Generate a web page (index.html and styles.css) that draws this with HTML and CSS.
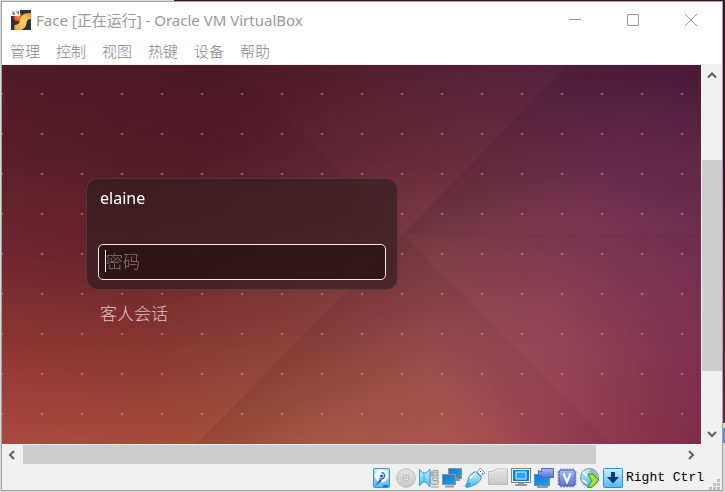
FILE: index.html
```html
<!DOCTYPE html>
<html lang="zh-CN">
<head>
<meta charset="utf-8">
<title>Face [正在运行] - Oracle VM VirtualBox</title>
<link rel="stylesheet" href="styles.css">
</head>
<body>
<div class="window">
  <header class="titlebar">
    <svg class="app-icon" viewBox="0 0 20 20" aria-hidden="true">
      <defs>
        <linearGradient id="gold" x1="1" y1="0" x2="0" y2="1"><stop offset="0" stop-color="#f29a22"/><stop offset=".5" stop-color="#ffd268"/><stop offset="1" stop-color="#f4a52e"/></linearGradient>
        <radialGradient id="ball"><stop offset="0" stop-color="#ff9a3a"/><stop offset="1" stop-color="#d8400f"/></radialGradient>
      </defs>
      <rect width="20" height="20" fill="#2c313d"/>
      <circle cx="7" cy="7" r="4.500" fill="url(#ball)"/>
      <path d="M20 3v6c-3 0-4 1-4.500 4-.8 4-2.500 6-5.500 7H3.500v-5C6 15 8 14 8.500 12 9 8 11 4.500 14.500 3.500z" fill="url(#gold)"/>
      <rect width="9" height="6" fill="#f4f4f2"/>
      <path d="M2 1v3.500h1.500V3H2M6 1v2h1.500V1v3.500" fill="none" stroke="#666" stroke-width=".8"/>
    </svg>
    <h1>Face [正在运行] - Oracle VM VirtualBox</h1>
    <div class="window-buttons">
      <button aria-label="最小化"><svg viewBox="0 0 12 12"><path d="M0 5.500h12"/></svg></button>
      <button aria-label="最大化"><svg viewBox="0 0 12 12"><path d="M.5.5h11v11H.5z"/></svg></button>
      <button aria-label="关闭"><svg viewBox="0 0 12 12"><path d="M0 0l12 12M12 0L0 12"/></svg></button>
    </div>
  </header>
  <nav class="menubar">
    <button>管理</button><button>控制</button><button>视图</button><button>热键</button><button>设备</button><button>帮助</button>
  </nav>
  <div class="viewport">
    <main class="screen">
      <div class="wallpaper" aria-hidden="true">
        <div class="band band-5"></div>
        <div class="band band-4"></div>
        <div class="band band-3"></div>
        <div class="band band-2"></div>
        <div class="band band-1"></div>
        <svg class="facets" viewBox="0 0 699 379" preserveAspectRatio="none">
          <defs>
            <linearGradient id="fa" gradientUnits="userSpaceOnUse" x1="480" y1="80" x2="560" y2="150"><stop offset="0" stop-color="#200a20" stop-opacity=".13"/><stop offset="1" stop-color="#200a20" stop-opacity="0"/></linearGradient>
            <linearGradient id="fb" gradientUnits="userSpaceOnUse" x1="0" y1="169" x2="0" y2="240"><stop offset="0" stop-color="#200a10" stop-opacity=".05"/><stop offset="1" stop-color="#200a10" stop-opacity="0"/></linearGradient>
            <linearGradient id="fc" gradientUnits="userSpaceOnUse" x1="300" y1="270" x2="370" y2="340"><stop offset="0" stop-color="#300a10" stop-opacity=".1"/><stop offset="1" stop-color="#300a10" stop-opacity="0"/></linearGradient>
            <linearGradient id="fd" gradientUnits="userSpaceOnUse" x1="500" y1="270" x2="440" y2="330"><stop offset="0" stop-color="#300a20" stop-opacity=".06"/><stop offset="1" stop-color="#300a20" stop-opacity="0"/></linearGradient>
            <linearGradient id="fe" gradientUnits="userSpaceOnUse" x1="320" y1="90" x2="240" y2="160"><stop offset="0" stop-color="#200a14" stop-opacity=".06"/><stop offset="1" stop-color="#200a14" stop-opacity="0"/></linearGradient>
          </defs>
          <path d="M566 0H699V169H401z" fill="url(#fa)"/>
          <path d="M401 169H699V379H608z" fill="url(#fb)"/>
          <path d="M401 169L194 379H608z" fill="url(#fc)"/>
          <path d="M401 169L608 379H194z" fill="url(#fd)"/>
          <path d="M230 0L401 169H100V0z" fill="url(#fe)"/>
        </svg>
        <svg class="dots">
          <defs><pattern id="dot" x="-1" y="28" width="40" height="40" patternUnits="userSpaceOnUse"><rect width="2" height="2" fill="#ffdce1" fill-opacity=".32"/></pattern></defs>
          <rect width="100%" height="100%" fill="url(#dot)"/>
        </svg>
      </div>
      <div class="greeter">
        <form class="login">
          <label for="password">elaine</label>
          <div class="field">
            <input id="password" type="password" placeholder="密码">
            <span class="caret"></span>
          </div>
        </form>
        <button class="guest">客人会话</button>
      </div>
    </main>
    <div class="scroll vertical">
      <button aria-label="向上滚动"><svg viewBox="0 0 10 10"><path d="M1 7.500l4-4 4 4"/></svg></button>
      <div class="track"><div class="thumb"></div></div>
      <button aria-label="向下滚动"><svg viewBox="0 0 10 10"><path d="M1 3l4 4 4-4"/></svg></button>
    </div>
    <div class="scroll horizontal">
      <button aria-label="向左滚动"><svg viewBox="0 0 10 10"><path d="M7 1L3 5l4 4"/></svg></button>
      <div class="track"><div class="thumb"></div></div>
      <button aria-label="向右滚动"><svg viewBox="0 0 10 10"><path d="M3 1l4 4-4 4"/></svg></button>
    </div>
    <div class="corner"></div>
  </div>
  <footer class="statusbar">
    <svg class="defs" aria-hidden="true"><defs>
      <linearGradient id="sky" x1="0" y1="0" x2="0" y2="1"><stop offset="0" stop-color="#c8f1ff"/><stop offset="1" stop-color="#4db9f5"/></linearGradient>
      <linearGradient id="blue" x1="0" y1="0" x2="1" y2="1"><stop offset="0" stop-color="#0b78d8"/><stop offset="1" stop-color="#18a5f8"/></linearGradient>
      <linearGradient id="grey" x1="0" y1="0" x2="0" y2="1"><stop offset="0" stop-color="#e4e4e4"/><stop offset="1" stop-color="#c8c8c8"/></linearGradient>
      <linearGradient id="violet" x1="0" y1="0" x2="0" y2="1"><stop offset="0" stop-color="#a5bdf5"/><stop offset="1" stop-color="#5573d6"/></linearGradient>
    </defs></svg>
    <div class="indicators">
      <svg viewBox="0 0 20 20"><rect x=".5" y=".5" width="16" height="19" rx="1.500" fill="url(#sky)" stroke="#3d8fd0"/><circle cx="8.500" cy="8" r="6.500" fill="#fff"/><path d="M8.500 4.500a3.200 3.200 0 1 1-2 5.800" fill="none" stroke="#2b6fc0" stroke-width="1.500"/><circle cx="8.500" cy="8" r="1.500" fill="#1d5aa8"/><path d="M2 18l5-7 2 2z" fill="#1f65b8"/><path d="M10 18h5" stroke="#1f78c8" stroke-width="2"/></svg>
      <svg viewBox="0 0 20 20"><circle cx="10" cy="10" r="9.300" fill="url(#grey)" stroke="#bdbdbd"/><circle cx="10" cy="10" r="3" fill="#e4e4e4" stroke="#b8b8b8"/><circle cx="10" cy="10" r="1" fill="#aaa"/></svg>
      <svg viewBox="0 0 20 20"><path d="M10 4h3v4h-3zM14 2.500h5v10h-5zM11 9v5q1 3 5 3t4-4M12 19h8" fill="#d2d2d2" stroke="#999"/><path d="M14 5h5M14 7.500h5M14 10h5" stroke="#aaa"/><path d="M.5 1.500L4 5h3l4-4v18l-4-5H4L.5 18z" fill="url(#sky)" stroke="#359de4"/><path d="M5 5.500v8" stroke="#3ca7ea"/></svg>
      <svg viewBox="0 0 20 20"><rect x="6.500" y=".5" width="13" height="10" fill="url(#blue)" stroke="#8b949c"/><path d="M14 12h4" stroke="#8b949c" stroke-width="2"/><rect x=".5" y="6.500" width="13" height="10" fill="url(#blue)" stroke="#8b949c"/><path d="M3 18.500h9" stroke="#999" stroke-width="2"/></svg>
      <svg viewBox="0 0 20 20"><path d="M12 4l3-4 5 5-4 3z" fill="#f5f5f5" stroke="#999"/><path d="M15 3l1 1M17 5l1 1" stroke="#555"/><path d="M10.500 3.500l6 6q-2 6-10 8.500L2 19.500.5 18l2-4q1-8 8-10.500z" fill="url(#sky)" stroke="#318ed4"/><path d="M5 10l5-4" stroke="#fff" stroke-width="2"/><path d="M5 15l-4 4" stroke="#2b9ce5" stroke-width="2"/></svg>
      <svg viewBox="0 0 20 20"><path d="M.5 16.500v-13L6 3l2-2h11.500v15.500z" fill="url(#grey)" stroke="#bbb"/><path d="M1 5l5-1 2-2h11" fill="none" stroke="#e9e9e9"/></svg>
      <svg viewBox="0 0 20 20"><rect x=".5" y=".5" width="19" height="14" fill="#e8f6ff" stroke="#6f8799"/><rect x="2" y="2" width="16" height="11" fill="#087fdb"/><rect x="5" y="4" width="10" height="7" fill="#28a4f3" stroke="#d9f2ff"/><path d="M4 17h12M7 15.500h6" stroke="#969696" stroke-width="2"/></svg>
      <svg viewBox="0 0 20 20"><rect x=".5" y="6.500" width="15" height="11" fill="url(#blue)" stroke="#7c8c99"/><path d="M3 19h11" stroke="#999" stroke-width="2"/><path d="M4.500 2.500l3 1.500V.5h12v9h-12V7l-3 1.500z" fill="url(#violet)" stroke="#5269bd"/></svg>
      <svg viewBox="0 0 20 20"><path d="M4 .5v19M7 .5v19M10 .5v19M13 .5v19M16 .5v19M.5 4h19M.5 7h19M.5 10h19M.5 13h19M.5 16h19" stroke="#4d5bb8"/><rect x="2" y="2" width="16" height="16" rx="2" fill="url(#violet)" stroke="#4d5bb8"/><path d="M6.500 5.500L10 14l3.500-8.500" fill="none" stroke="#fff" stroke-width="2"/></svg>
      <svg viewBox="0 0 20 20"><circle cx="9.500" cy="9.500" r="9" fill="url(#sky)" stroke="#6b93b5"/><path d="M10 1a9 9 0 0 1 8 8l-5-1-4-4z" fill="#a5b2be"/><path d="M3 4l4 4M2 12l5 3" stroke="#fff" stroke-width="2"/><path d="M8 6h5l6 6-7 7.500H7.500l4-6.500z" fill="#8fdc2e" stroke="#3d9a18"/><path d="M11 8l4 4-4 5" fill="none" stroke="#c4f268"/></svg>
      <svg viewBox="0 0 20 20"><rect x=".5" y=".5" width="19" height="19" rx="1" fill="url(#sky)" stroke="#2a91cf"/><path d="M8 4h4v5h4l-6 6.500L4 9h4z" fill="#073c6c"/></svg>
    </div>
    <span class="host-key">Right Ctrl</span>
    <svg class="grip" viewBox="0 0 11 11" aria-hidden="true"><path d="M8 0h3v3H8zM4 4h3v3H4zM8 4h3v3H8zM0 8h3v3H0zM4 8h3v3H4zM8 8h3v3H8z" fill="#bfbfbf"/></svg>
  </footer>
</div>
</body>
</html>
```
FILE: styles.css
```css
* { box-sizing: border-box; }

body {
  margin: 0;
  min-height: 100vh;
  display: flex;
  padding: 1px 2px 1px 1px;
  background:
    linear-gradient(#d8d8d8, #d8d8d8) left / 174px 100% no-repeat,
    linear-gradient(#3c1028 0 30%, #6c2440 86%, #d8d8d8 86% 87%, #5b8fdc 87% 90%, #d8d8d8 90%);
  font-family: "Noto Sans", "Noto Sans CJK SC", sans-serif;
}

button {
  margin: 0;
  padding: 0;
  border: 0;
  background: none;
  font: inherit;
  color: inherit;
}

svg { display: block; }

.window {
  flex: 1;
  min-width: 0;
  display: flex;
  flex-direction: column;
  border: 1px solid #a3a3a3;
  background: #fff;
}

.titlebar {
  height: 37px;
  display: flex;
  align-items: center;
  gap: 5px;
  padding: 0 2px 1px 9px;
  color: #999;
}

.app-icon { width: 20px; height: 20px; }

h1 {
  flex: 1;
  margin: 0;
  font-size: 15px;
  line-height: 20px;
  font-weight: 400;
  white-space: nowrap;
}

.window-buttons { display: flex; }

.window-buttons button {
  width: 58px;
  height: 36px;
  display: grid;
  place-items: center;
}

.window-buttons svg {
  width: 12px;
  height: 12px;
  fill: none;
  stroke: #999;
}

.menubar {
  height: 26px;
  display: flex;
  align-items: center;
  gap: 16px;
  padding: 0 8px 2px;
  border-bottom: 1px solid #f0f0f0;
  color: #858585;
  font-family: "Noto Sans CJK SC", sans-serif;
  font-size: 15px;
  font-weight: 300;
  line-height: 20px;
}

.viewport {
  flex: 1;
  display: grid;
  grid-template: 1fr 20px / 1fr 20px;
  gap: 1px;
}

.screen { position: relative; overflow: hidden; }

.wallpaper, .band, .facets, .dots {
  position: absolute;
  inset: 0;
  width: 100%;
  height: 100%;
}

/* Each band fades into the one below it, giving a smooth colour mesh. */
.band-5 { background: linear-gradient(90deg, #ac4a40, #a54d39 27%, #a85843 43%, #ab5550 64%, #9a4052 80%, #802b48); }
.band-4 {
  background: linear-gradient(90deg, #8f3632, #893732 20%, #8d4339 40%, #984c4b 62%, #984758 77%, #7c304e);
  mask-image: linear-gradient(#000 75%, transparent);
}
.band-3 {
  background: linear-gradient(90deg, #6f272e, #68232c 20%, #753039 45%, #81404a 62%, #823c53 80%, #743050);
  mask-image: linear-gradient(#000 50%, transparent 75%);
}
.band-2 {
  background: linear-gradient(90deg, #5b1e2a, #541b29 28%, #652737 52%, #6b2d40 70%, #662949 88%, #602847);
  mask-image: linear-gradient(#000 25%, transparent 50%);
}
.band-1 {
  background: linear-gradient(90deg, #501a28, #4c1826 30%, #521f30 55%, #54223a 76%, #471a38);
  mask-image: linear-gradient(#000, transparent 25%);
}

.greeter {
  position: relative;
  max-width: 396px;
  padding: 113px 0 0 84px;
  display: flex;
  flex-direction: column;
  align-items: stretch;
  gap: 11px;
}

.login {
  height: 112px;
  display: flex;
  flex-direction: column;
  justify-content: space-between;
  padding: 8px 11px 9px;
  border: 1px solid rgba(130, 110, 115, .3);
  border-radius: 12px;
  background: rgba(45, 30, 32, .64);
  backdrop-filter: blur(8px);
}

.login label {
  padding-left: 2px;
  color: #fff;
  font-size: 16px;
  line-height: 22px;
}

.field { position: relative; }

.field input {
  display: block;
  width: 100%;
  height: 36px;
  padding: 0 7px 4px;
  border: 1px solid #eee8e8;
  border-radius: 5px;
  outline: 0;
  background: rgba(30, 8, 10, .5);
  color: #fff;
  font-family: "Noto Sans CJK SC", sans-serif;
  font-size: 17px;
  font-weight: 300;
}

.field input::placeholder { color: #827a7a; opacity: 1; }

.caret {
  position: absolute;
  left: 7px;
  top: 6px;
  width: 1px;
  height: 22px;
  background: #fff;
}

.guest {
  align-self: flex-start;
  padding-left: 14px;
  color: #e0c6c6;
  font-family: "Noto Sans CJK SC", sans-serif;
  font-size: 17px;
  font-weight: 300;
  line-height: 24px;
}

.scroll {
  display: flex;
  background: #f0f0f0;
}

.scroll button {
  flex: 0 0 20px;
  display: grid;
  place-items: center;
}

.scroll svg {
  width: 10px;
  height: 10px;
  fill: none;
  stroke: #606060;
  stroke-width: 2;
}

.track { flex: 1; display: flex; }
.thumb { background: #cdcdcd; }

.vertical { flex-direction: column; }
.vertical .track { flex-direction: column; padding-top: 75px; }
.vertical .thumb { flex: 0 0 80%; }

.horizontal .thumb { width: 87%; margin: 0 0 1px 1px; }

.corner { background: #f0f0f0; margin: -1px 0 0 -1px; }

.statusbar {
  height: 25px;
  display: flex;
  align-items: center;
  justify-content: flex-end;
  padding-right: 2px;
  background: #f0f0f0;
}

.defs { position: absolute; width: 0; height: 0; }

.indicators { display: flex; gap: 3px; }
.indicators svg { width: 20px; height: 20px; }

.host-key {
  margin: 0 5px 0 3px;
  color: #000;
  font-family: "Liberation Mono", monospace;
  font-size: 13px;
  line-height: 20px;
}

.grip { width: 11px; height: 11px; align-self: flex-end; }
```
